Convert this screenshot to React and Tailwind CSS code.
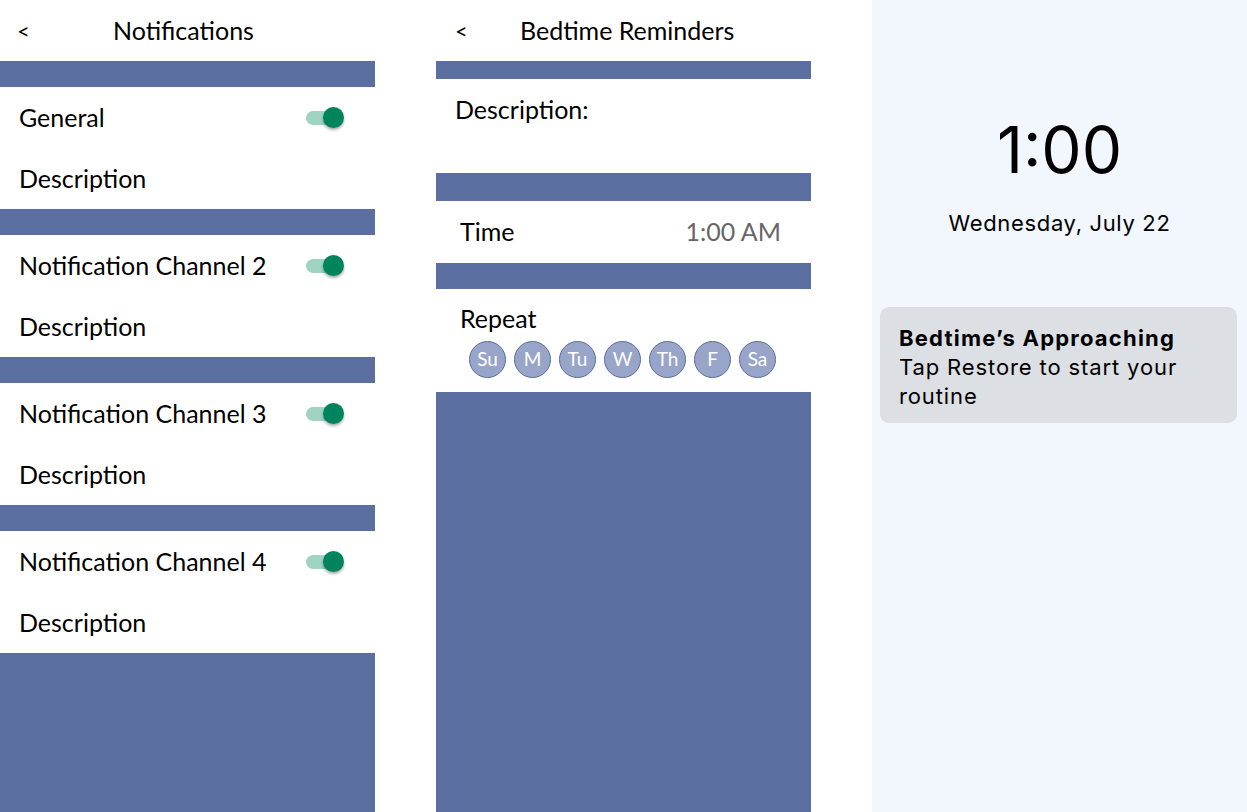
import React from "react";

const BLUE = "bg-[#5a6fa0]";

function Toggle() {
  return (
    <div className="relative w-[38px] h-[22px] mr-[31px]">
      <div className="absolute left-0 top-[4px] w-[32px] h-[14px] rounded-full bg-[#9fd4c3]" />
      <div className="absolute right-0 top-0 w-[21px] h-[21px] rounded-full bg-[#00845e] shadow-[0_2px_3px_rgba(0,0,0,0.35)]" />
    </div>
  );
}

function Channel({ name }) {
  return (
    <>
      <div className={`${BLUE} h-[26px]`} />
      <div className="h-[61px] flex items-center justify-between pl-[19px]">
        <span>{name}</span>
        <Toggle />
      </div>
      <div className="h-[61px] flex items-center pl-[19px]">
        <span>Description</span>
      </div>
    </>
  );
}

export default function App() {
  const days = ["Su", "M", "Tu", "W", "Th", "F", "Sa"];
  return (
    <div className="flex h-[812px] w-[1247px] bg-white overflow-hidden">
      {/* Left panel */}
      <div
        className="w-[375px] flex flex-col text-[25px] text-black"
        style={{ fontFamily: "Lato, 'Noto Sans', sans-serif" }}
      >
        <div className="h-[61px] flex items-center relative">
          <span className="pl-[17px] w-[113px] text-[22px]">&lt;</span>
          <span>Notifications</span>
        </div>
        <Channel name="General" />
        <Channel name="Notification Channel 2" />
        <Channel name="Notification Channel 3" />
        <Channel name="Notification Channel 4" />
        <div className={`${BLUE} flex-1`} />
      </div>

      <div className="w-[61px]" />

      {/* Middle panel */}
      <div
        className="w-[375px] flex flex-col text-[25px] text-black"
        style={{ fontFamily: "Lato, 'Noto Sans', sans-serif" }}
      >
        <div className="h-[61px] flex items-center">
          <span className="pl-[19px] w-[84px] text-[22px]">&lt;</span>
          <span>Bedtime Reminders</span>
        </div>
        <div className={`${BLUE} h-[18px]`} />
        <div className="h-[94px] pl-[19px] pt-[12px]">
          <span>Description:</span>
        </div>
        <div className={`${BLUE} h-[28px]`} />
        <div className="h-[62px] flex items-center justify-between pl-[24px] pr-[30px]">
          <span>Time</span>
          <span className="text-[#666666]">1:00 AM</span>
        </div>
        <div className={`${BLUE} h-[26px]`} />
        <div className="h-[103px] pl-[24px] pt-[14px]">
          <div className="leading-[30px]">Repeat</div>
          <div className="flex gap-[8px] pl-[9px] mt-[8px]">
            {days.map((d) => (
              <div
                key={d}
                className="w-[37px] h-[37px] rounded-full bg-[#98a5c8] border border-[#5a6fa0] flex items-center justify-center text-white text-[19px]"
              >
                {d}
              </div>
            ))}
          </div>
        </div>
        <div className={`${BLUE} flex-1`} />
      </div>

      <div className="w-[61px]" />

      {/* Right panel */}
      <div
        className="flex-1 bg-[#f2f6fd] flex flex-col items-center text-black"
        style={{ fontFamily: "Inter, 'Noto Sans', sans-serif" }}
      >
        <div className="mt-[110px] text-[64px] leading-[80px] font-normal">1:00</div>
        <div className="mt-[18px] text-[22px] leading-[30px] tracking-[0.03em]">Wednesday, July 22</div>
        <div className="self-stretch mt-[69px] ml-[8px] mr-[10px] rounded-[9px] bg-[#dcdfe4] px-[19px] pt-[17px] pb-[12px] text-[22px] leading-[29px] tracking-[0.04em]">
          <div className="font-bold tracking-[0.055em]">Bedtime’s Approaching</div>
          <div>Tap Restore to start your</div>
          <div>routine</div>
        </div>
      </div>
    </div>
  );
}
